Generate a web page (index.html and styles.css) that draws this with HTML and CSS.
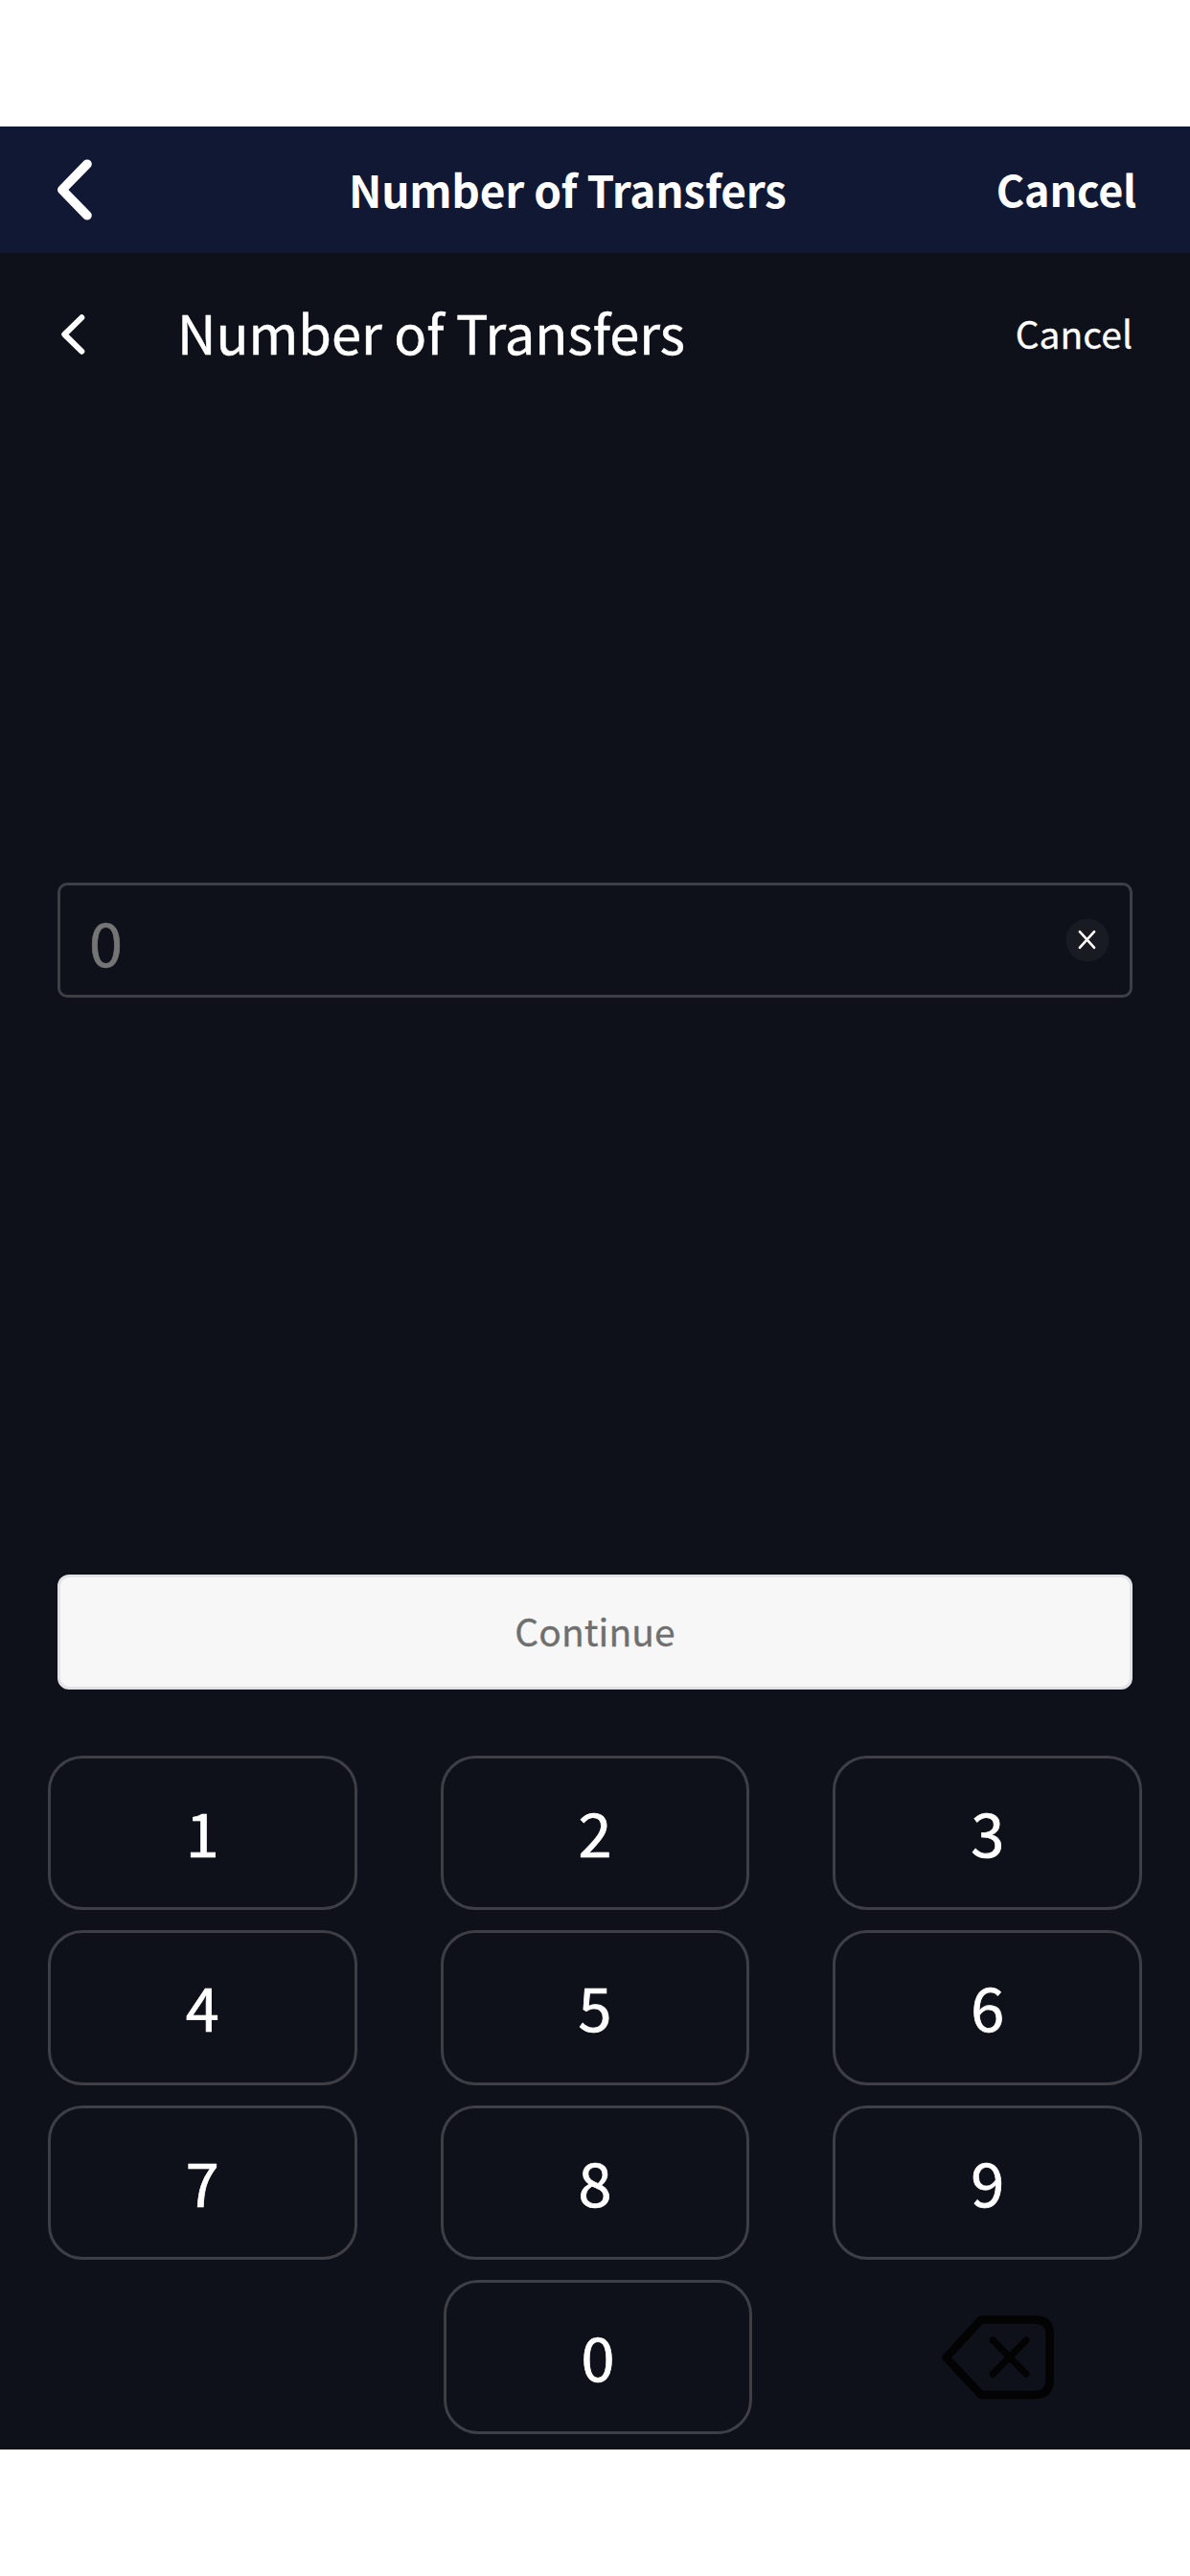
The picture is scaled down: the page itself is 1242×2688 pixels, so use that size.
FILE: index.html
```html
<!DOCTYPE html>
<html lang="en">
<head>
<meta charset="utf-8">
<title>Number of Transfers</title>
<link rel="stylesheet" href="styles.css">
</head>
<body>
<main class="screen">
  <header class="topbar">
    <svg class="topbar-back" viewBox="0 0 40 66"><path d="M33 6.2 6.8 33 33 59.8"/></svg>
    <h1 class="topbar-title">Number of Transfers</h1>
    <span class="topbar-cancel">Cancel</span>
  </header>
  <section class="subbar">
    <svg class="subbar-back" viewBox="0 0 28 44"><path d="M23.3 4.3 5.3 22 23.3 39.7"/></svg>
    <h2 class="subbar-title">Number of Transfers</h2>
    <span class="subbar-cancel">Cancel</span>
  </section>
  <div class="field">
    <span class="field-value">0</span>
    <svg class="clear" viewBox="0 0 46 46"><circle cx="23" cy="23" r="22.5"/><path d="m14.9 14.2 15.2 16.6m0-16.6L14.9 30.8"/></svg>
  </div>
  <button class="continue">Continue</button>
  <div class="keypad">
    <button class="key">1</button>
    <button class="key">2</button>
    <button class="key">3</button>
    <button class="key">4</button>
    <button class="key">5</button>
    <button class="key">6</button>
    <button class="key">7</button>
    <button class="key">8</button>
    <button class="key">9</button>
    <button class="key key-zero">0</button>
    <div class="erase">
      <svg class="erase-icon" viewBox="0 0 120 90"><path class="erase-body" d="M43 5.5H100.5Q114.5 6 114.5 20V69Q114.5 83 100.5 84H43L6.5 45Z"/><path class="erase-cross" d="m55.3 27 34.7 35.3M90 27 55.3 62.3"/></svg>
    </div>
  </div>
</main>
</body>
</html>
```

FILE: styles.css
```css
* {
  box-sizing: border-box;
}

body {
  margin: 0;
  padding: 132px 0;
  background: #fff;
  font-family: "Noto Sans CJK SC", "Noto Sans", sans-serif;
  color: #fff;
}

.screen {
  display: flex;
  flex-direction: column;
  height: 2424px;
  background: #0e101a;
}

svg {
  fill: none;
  stroke: #fff;
  stroke-linecap: round;
  stroke-linejoin: round;
  flex: none;
}

h1,
h2 {
  margin: 0;
}

button {
  margin: 0;
  padding: 0;
  font: inherit;
  color: inherit;
  background: none;
}

.topbar {
  display: flex;
  align-items: center;
  height: 132px;
  padding: 0 56px 0 58px;
  background: #111834;
}

.topbar-back {
  width: 40px;
  height: 66px;
  stroke-width: 9.6;
}

.topbar-title,
.topbar-cancel {
  padding-bottom: 2px;
  font-weight: 700;
  line-height: 68px;
}

.topbar-title {
  margin-left: 266px;
  font-size: 46px;
  letter-spacing: -0.25px;
}

.topbar-cancel {
  margin-left: auto;
  font-size: 45px;
  letter-spacing: -0.25px;
}

.subbar {
  display: flex;
  align-items: center;
  height: 170px;
  padding: 0 60px 0 62px;
}

.subbar-back {
  width: 28px;
  height: 44px;
  stroke-width: 6;
}

.subbar-title {
  margin-left: 95px;
  padding-bottom: 6px;
  font-size: 56px;
  font-weight: 400;
  line-height: 80px;
  -webkit-text-stroke: 0.5px currentColor;
}

.subbar-cancel {
  margin-left: auto;
  padding-bottom: 4px;
  font-size: 39px;
  line-height: 60px;
  -webkit-text-stroke: 0.3px currentColor;
}

.field {
  display: flex;
  align-items: center;
  justify-content: space-between;
  height: 120px;
  margin: 487px 60px 0;
  padding: 0 21px 0 30px;
  border: 3px solid #3e3f46;
  border-radius: 10px;
}

.field-value {
  padding-top: 2px;
  font-size: 63px;
  line-height: 88px;
  color: #757576;
  -webkit-text-stroke: 0.6px currentColor;
}

.clear {
  width: 46px;
  height: 46px;
  stroke-width: 2.6;
}

.clear circle {
  fill: #191b23;
  stroke: none;
}

.continue {
  height: 120px;
  margin: 602px 60px 0;
  padding-bottom: 5px;
  border: 3px solid #e1e2e5;
  border-radius: 12px;
  background: #f7f7f7;
  font-size: 39px;
  letter-spacing: 0.1px;
  color: #6f6f70;
  -webkit-text-stroke: 0.3px currentColor;
}

.keypad {
  display: grid;
  grid-template-columns: repeat(3, 1fr);
  grid-auto-rows: 161.33px;
  gap: 21px 87px;
  margin: 69px 50px 0;
}

.key {
  padding-bottom: 4px;
  border: 3px solid #3e3f46;
  border-radius: 36px;
  font-size: 63px;
  -webkit-text-stroke: 0.7px currentColor;
}

.key-zero {
  grid-column: 2;
  margin: 0 -3px 0 3px;
}

.erase {
  display: flex;
  align-items: center;
  justify-content: center;
  padding-left: 20px;
}

.erase-icon {
  width: 120px;
  height: 90px;
  stroke: #030303;
}

.erase-body {
  stroke-width: 8.4;
}

.erase-cross {
  stroke-width: 7;
}
```
